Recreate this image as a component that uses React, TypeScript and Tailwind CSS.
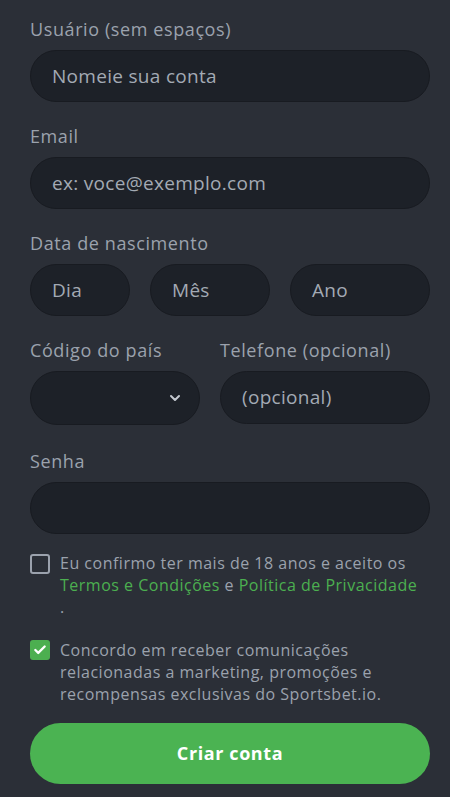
import { ChevronDown, Check } from "lucide-react";

// Campo de texto arredondado
const Field = ({ placeholder, className = "" }: { placeholder?: string; className?: string }) => (
  <div
    className={`h-[52px] rounded-full bg-[#1d2128] border border-[#181b21] flex items-center px-[21px] text-[19px] tracking-[0.3px] text-[#a3aab4] ${className}`}
  >
    {placeholder}
  </div>
);

const Label = ({ children }: { children: React.ReactNode }) => (
  <div className="text-[18px] leading-[22px] tracking-[0.6px] text-[#9ba2ad] mb-[10px] whitespace-nowrap">
    {children}
  </div>
);

export default function App() {
  return (
    <div
      className="min-h-screen w-[450px] bg-[#2b2f37] pl-[30px] pr-[20px] pt-[18px] pb-[13px]"
      style={{ fontFamily: "'Open Sans', 'Noto Sans', sans-serif" }}
    >
      <Label>Usuário (sem espaços)</Label>
      <Field placeholder="Nomeie sua conta" className="mt-[1px]" />

      <div className="mt-[23px]">
        <Label>Email</Label>
        <Field placeholder="ex: voce@exemplo.com" />
      </div>

      <div className="mt-[23px]">
        <Label>Data de nascimento</Label>
        <div className="flex gap-[20px]">
          <Field placeholder="Dia" className="w-[100px]" />
          <Field placeholder="Mês" className="w-[120px]" />
          <Field placeholder="Ano" className="flex-1" />
        </div>
      </div>

      <div className="mt-[23px] flex gap-[20px]">
        <div className="w-[170px]">
          <Label>Código do país</Label>
          <div className="h-[54px] rounded-full bg-[#1d2128] border border-[#181b21] flex items-center justify-end pr-[16px]">
            <ChevronDown size={16} strokeWidth={3} className="text-[#c4c9d0]" />
          </div>
        </div>
        <div className="flex-1">
          <Label>Telefone (opcional)</Label>
          <Field placeholder="(opcional)" className="h-[53px]" />
        </div>
      </div>

      <div className="mt-[25px]">
        <Label>Senha</Label>
        <Field />
      </div>

      {/* Termos */}
      <div className="mt-[18px] flex gap-[10px] text-[16px] leading-[22px] tracking-[0.5px] text-[#9ba2ad]">
        <div className="mt-[2px] w-[20px] h-[20px] shrink-0 rounded-[3px] border-2 border-[#9ba2ad]" />
        <div>
          Eu confirmo ter mais de 18 anos e aceito os{" "}
          <span className="text-[#4caf50]">Termos e Condições</span> e{" "}
          <span className="text-[#4caf50]">Política de Privacidade</span>
          <br />.
        </div>
      </div>

      <div className="mt-[21px] flex gap-[10px] text-[16px] leading-[22px] tracking-[0.5px] text-[#9ba2ad]">
        <div className="mt-[1px] w-[20px] h-[20px] shrink-0 rounded-[3px] bg-[#4caf50] flex items-center justify-center">
          <Check size={14} strokeWidth={4} className="text-white" />
        </div>
        <div>
          Concordo em receber comunicações relacionadas a marketing, promoções e recompensas
          exclusivas do Sportsbet.io.
        </div>
      </div>

      <button className="mt-[18px] w-full h-[61px] rounded-full bg-[#4bb352] text-white text-[18px] tracking-[0.6px] font-bold">
        Criar conta
      </button>
    </div>
  );
}
